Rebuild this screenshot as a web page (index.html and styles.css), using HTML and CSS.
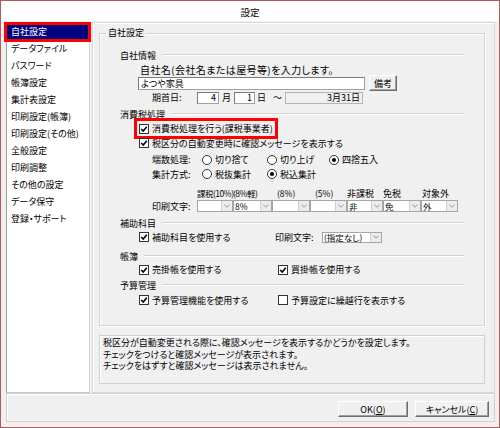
FILE: index.html
```html
<!DOCTYPE html>
<html lang="ja">
<head>
<meta charset="utf-8">
<title>設定</title>
<link rel="stylesheet" href="styles.css">
</head>
<body>
<div class="window">
  <div class="titlebar">設定</div>
  <div class="content">
    <ul class="nav">
      <li class="active">自社設定</li>
      <li>データファイル</li>
      <li>パスワード</li>
      <li>帳簿設定</li>
      <li>集計表設定</li>
      <li>印刷設定(帳簿)</li>
      <li>印刷設定(その他)</li>
      <li>全般設定</li>
      <li>印刷調整</li>
      <li>その他の設定</li>
      <li>データ保守</li>
      <li>登録・サポート</li>
    </ul>
    <div class="panel">
      <div class="group">
        <span class="group-title">自社設定</span>

        <div class="sec">自社情報</div>
        <div class="row lbl-row"><span class="wide">自社名(会社名または屋号等)を入力します。</span></div>
        <div class="row name-row">
          <span class="textbox name">よつや家具</span>
          <span class="btn bikou">備考</span>
        </div>
        <div class="row period-row">
          <span class="plabel">期首日:</span>
          <span class="textbox num m1">4</span>
          <span class="unit u1">月</span>
          <span class="textbox num d1">1</span>
          <span class="unit u2">日</span>
          <span class="tilde">〜</span>
          <span class="textbox disabled">3月31日</span>
        </div>

        <div class="sec mt3">消費税処理</div>
        <div class="row chk-row h15">
          <span class="hl"><span class="cb on"><svg viewBox="0 0 8 8"><polyline points="1.2,4 3.2,6 6.8,1.8"/></svg></span>消費税処理を行う(課税事業者)</span>
        </div>
        <div class="row chk-row h14">
          <span class="cb on"><svg viewBox="0 0 8 8"><polyline points="1.2,4 3.2,6 6.8,1.8"/></svg></span>税区分の自動変更時に確認メッセージを表示する
        </div>
        <div class="row radio-row mt2 h15">
          <span class="rlabel">端数処理:</span>
          <span class="opt o1"><span class="rb"></span>切り捨て</span>
          <span class="opt o2"><span class="rb"></span>切り上げ</span>
          <span class="opt"><span class="rb on"></span>四捨五入</span>
        </div>
        <div class="row radio-row h14">
          <span class="rlabel">集計方式:</span>
          <span class="opt o1"><span class="rb"></span>税抜集計</span>
          <span class="opt o2"><span class="rb on"></span>税込集計</span>
        </div>
        <div class="row combo-labels mt5">
          <span class="tight">課税(10%)</span>
          <span class="tight">(8%軽)</span>
          <span class="shift">(8%)</span>
          <span class="shift">(5%)</span>
          <span>非課税</span>
          <span>免税</span>
          <span class="shift1">対象外</span>
        </div>
        <div class="row combo-row">
          <span class="clabel">印刷文字:</span>
          <span class="combos">
            <span class="combo"><span class="val"></span><span class="dd"><svg viewBox="0 0 7 4"><polyline points="0.5,0.5 3.5,3.3 6.5,0.5"/></svg></span></span>
            <span class="combo"><span class="val">8%</span><span class="dd"><svg viewBox="0 0 7 4"><polyline points="0.5,0.5 3.5,3.3 6.5,0.5"/></svg></span></span>
            <span class="combo"><span class="val"></span><span class="dd"><svg viewBox="0 0 7 4"><polyline points="0.5,0.5 3.5,3.3 6.5,0.5"/></svg></span></span>
            <span class="combo"><span class="val"></span><span class="dd"><svg viewBox="0 0 7 4"><polyline points="0.5,0.5 3.5,3.3 6.5,0.5"/></svg></span></span>
            <span class="combo"><span class="val">非</span><span class="dd"><svg viewBox="0 0 7 4"><polyline points="0.5,0.5 3.5,3.3 6.5,0.5"/></svg></span></span>
            <span class="combo"><span class="val">免</span><span class="dd"><svg viewBox="0 0 7 4"><polyline points="0.5,0.5 3.5,3.3 6.5,0.5"/></svg></span></span>
            <span class="combo"><span class="val">外</span><span class="dd"><svg viewBox="0 0 7 4"><polyline points="0.5,0.5 3.5,3.3 6.5,0.5"/></svg></span></span>
          </span>
        </div>

        <div class="sec mt4">補助科目</div>
        <div class="row chk-row h14">
          <span class="col aux"><span class="cb on"><svg viewBox="0 0 8 8"><polyline points="1.2,4 3.2,6 6.8,1.8"/></svg></span>補助科目を使用する</span>
          <span class="alabel">印刷文字:</span>
          <span class="combo wide-combo"><span class="val">(指定なし)</span><span class="dd"><svg viewBox="0 0 7 4"><polyline points="0.5,0.5 3.5,3.3 6.5,0.5"/></svg></span></span>
        </div>

        <div class="sec mt5">帳簿</div>
        <div class="row chk-row h13">
          <span class="col"><span class="cb on"><svg viewBox="0 0 8 8"><polyline points="1.2,4 3.2,6 6.8,1.8"/></svg></span>売掛帳を使用する</span>
          <span class="col"><span class="cb on"><svg viewBox="0 0 8 8"><polyline points="1.2,4 3.2,6 6.8,1.8"/></svg></span>買掛帳を使用する</span>
        </div>

        <div class="sec mt2">予算管理</div>
        <div class="row chk-row mt1 h14">
          <span class="col"><span class="cb on"><svg viewBox="0 0 8 8"><polyline points="1.2,4 3.2,6 6.8,1.8"/></svg></span>予算管理機能を使用する</span>
          <span class="col"><span class="cb"></span>予算設定に繰越行を表示する</span>
        </div>
      </div>

      <div class="info">
        <p>税区分が自動変更される際に、確認メッセージを表示するかどうかを設定します。</p>
        <p>チェックをつけると確認メッセージが表示されます。</p>
        <p>チェックをはずすと確認メッセージは表示されません。</p>
      </div>
    </div>
  </div>
  <div class="buttonbar">
    <span class="btn ok">OK(<u>O</u>)</span>
    <span class="btn cancel">キャンセル(<u>C</u>)</span>
  </div>
</div>
</body>
</html>
```

FILE: styles.css
```css
* { box-sizing: border-box; }
html, body { margin: 0; padding: 0; }
body {
  width: 500px;
  height: 428px;
  background: #f0f0f0;
  font-family: "Noto Sans CJK JP", "Noto Sans", sans-serif;
  font-size: 9px;
  color: #000;
  font-feature-settings: "palt";
  overflow: hidden;
}

.window {
  width: 500px;
  height: 428px;
  border: 1px solid #b4595b;
  background: #f0f0f0;
  display: flex;
  flex-direction: column;
}

.titlebar {
  flex: none;
  height: 20px;
  background: #fff;
  text-align: center;
  line-height: 22px;
  font-size: 9.5px;
}

.content {
  flex: none;
  display: flex;
  height: 372px;
  padding: 1px 4px 0 5px;
}

/* left navigation list */
.nav {
  list-style: none;
  margin: 0;
  padding: 2px 0 0 0;
  width: 84px;
  height: 371px;
  flex: none;
  background: #fff;
  border: 1px solid #a0a0a0;
  border-right-color: #d8d8d8;
  border-bottom-color: #c8c8c8;
}
.nav li {
  height: 14px;
  line-height: 14px;
  margin: 0 1px 3px 0;
  padding-left: 4px;
  white-space: nowrap;
}
.nav li.active {
  background: #000080;
  color: #fff;
  outline: 3px solid #f00;
}

/* right panel */
.panel {
  flex: 1;
  margin-left: 2px;
  height: 371px;
  border: 1px solid #d9d9d9;
  box-shadow: inset 1px 1px 0 #fff;
  padding: 10px 9px 0 6px;
}

.group {
  position: relative;
  height: 293px;
  border: 1px solid #d3d3d3;
  box-shadow: inset 1px 1px 0 #fff, 1px 1px 0 #fff;
  padding-top: 14px;
}
.group-title {
  position: absolute;
  top: -8px;
  left: 6px;
  padding: 0 2px;
  line-height: 14px;
  background: #f0f0f0;
}

.sec {
  display: flex;
  align-items: center;
  height: 14px;
  margin: 0 20px;
  white-space: nowrap;
}
.sec::after {
  content: "";
  flex: 1;
  margin-left: 6px;
  border-top: 1px solid #d3d3d3;
  border-bottom: 1px solid #fff;
}

.mt1 { margin-top: 1px; }
.mt2 { margin-top: 2px; }
.mt3 { margin-top: 3px; }
.mt4 { margin-top: 4px; }
.mt5 { margin-top: 5px; }
.h13 { height: 13px; }
.h14 { height: 14px; }
.h15 { height: 15px; }

.row {
  display: flex;
  align-items: center;
  white-space: nowrap;
}

.lbl-row {
  margin-top: 2px;
  height: 11px;
  padding-left: 40px;
}
.lbl-row .wide { font-size: 10px; letter-spacing: 0.4px; }

.textbox {
  display: inline-block;
  background: #fff;
  border: 1px solid #a0a0a0;
  border-top-color: #7a7a7a;
  border-left-color: #7a7a7a;
  padding: 0 2px;
  line-height: 11px;
  height: 13px;
  flex: none;
}

.name-row {
  height: 16px;
  padding-left: 38px;
}
.textbox.name { width: 227px; }

.btn {
  display: inline-flex;
  align-items: center;
  justify-content: center;
  flex: none;
  background: #f0f0f0;
  border: 1px solid;
  border-color: #fff #6d6d6d #6d6d6d #fff;
  box-shadow: inset -1px -1px 0 #a0a0a0;
  white-space: nowrap;
}
.btn.bikou {
  width: 28px;
  height: 16px;
  margin-left: 4px;
}

.period-row {
  height: 13px;
  padding-left: 52px;
}
.plabel { width: 45px; flex: none; }
.textbox.num { text-align: right; height: 12px; line-height: 10px; }
.textbox.m1 { width: 22px; }
.textbox.d1 { width: 21px; }
.unit { flex: none; }
.u1 { width: 15px; padding-left: 3px; }
.u2 { width: 18px; padding-left: 2px; }
.tilde { width: 12px; flex: none; }
.textbox.disabled {
  width: 78px;
  height: 12px;
  line-height: 10px;
  background: #f0f0f0;
  border-color: #b4b4b4;
  text-align: right;
}

/* checkboxes */
.chk-row { padding-left: 39px; }
.cb {
  display: inline-block;
  flex: none;
  width: 10px;
  height: 10px;
  margin-right: 3px;
  background: #fff;
  border: 1px solid #333;
  position: relative;
}
.cb svg {
  display: block;
  width: 8px;
  height: 8px;
  fill: none;
  stroke: #000;
  stroke-width: 1.6;
}
.hl {
  display: inline-flex;
  align-items: center;
  height: 11px;
  outline: 3px solid #f00;
  outline-offset: 2px;
}
.col {
  display: inline-flex;
  align-items: center;
  width: 139px;
  flex: none;
}
.col.aux { width: 136px; }

/* radios */
.radio-row { padding-left: 52px; }
.rlabel { width: 50px; flex: none; }
.opt {
  display: inline-flex;
  align-items: center;
  flex: none;
}
.opt.o1 { width: 65px; }
.opt.o2 { width: 62px; }
.rb {
  display: inline-block;
  position: relative;
  width: 10px;
  height: 10px;
  margin-right: 3px;
  border: 1px solid #333;
  border-radius: 50%;
  background: #fff;
}
.rb.on::after {
  content: "";
  position: absolute;
  left: 2px;
  top: 2px;
  width: 4px;
  height: 4px;
  border-radius: 50%;
  background: #000;
}

/* print-character combos */
.combo-labels {
  height: 14px;
  padding-left: 97px;
  display: grid;
  grid-template-columns: 36px 39px 38px 37px 36px 38px 37px;
}
.combo-labels span { white-space: nowrap; }
.combo-labels .tight { letter-spacing: -0.5px; font-size: 8.5px; }
.combo-labels .shift { padding-left: 5px; font-size: 8.5px; }
.combo-labels .shift1 { padding-left: 1px; }

.combo-row {
  height: 12px;
  padding-left: 52px;
}
.clabel { width: 45px; flex: none; }
.combos {
  display: grid;
  grid-template-columns: 36px 39px 38px 37px 36px 38px 37px;
  height: 12px;
}
.combo {
  display: flex;
  height: 12px;
  background: #fff;
  border: 1px solid #a5a5a5;
}
.combo .val {
  flex: 1;
  padding-left: 1px;
  font-size: 8.5px;
  line-height: 10px;
  white-space: nowrap;
}
.combo .dd {
  flex: none;
  width: 11px;
  display: flex;
  align-items: center;
  justify-content: center;
  background: #ececec;
  border-left: 1px solid #d0d0d0;
}
.combo .dd svg {
  width: 6px;
  height: 4px;
  fill: none;
  stroke: #7a8aa5;
  stroke-width: 1;
}
.alabel { width: 47px; flex: none; }
.combo.wide-combo {
  width: 60px;
  height: 11px;
  flex: none;
}
.combo.wide-combo .val { line-height: 9px; }

/* description box */
.info {
  margin-top: 9px;
  height: 49px;
  border: 1px solid #d0d0d0;
  box-shadow: inset 1px 1px 0 #fff;
  padding: 1px 3px;
}
.info p {
  margin: 0;
  line-height: 11.5px;
  white-space: nowrap;
}

/* bottom buttons */
.buttonbar {
  flex: none;
  height: 29px;
  margin: 0 4px 0 5px;
  border: 1px solid #d0d0d0;
  box-shadow: inset 1px 1px 0 #fff;
  display: flex;
  justify-content: flex-end;
  align-items: flex-start;
  gap: 7px;
  padding: 7px 5px 0 0;
}
.btn.ok { width: 70px; height: 16px; }
.btn.cancel { width: 74px; height: 16px; }
```
